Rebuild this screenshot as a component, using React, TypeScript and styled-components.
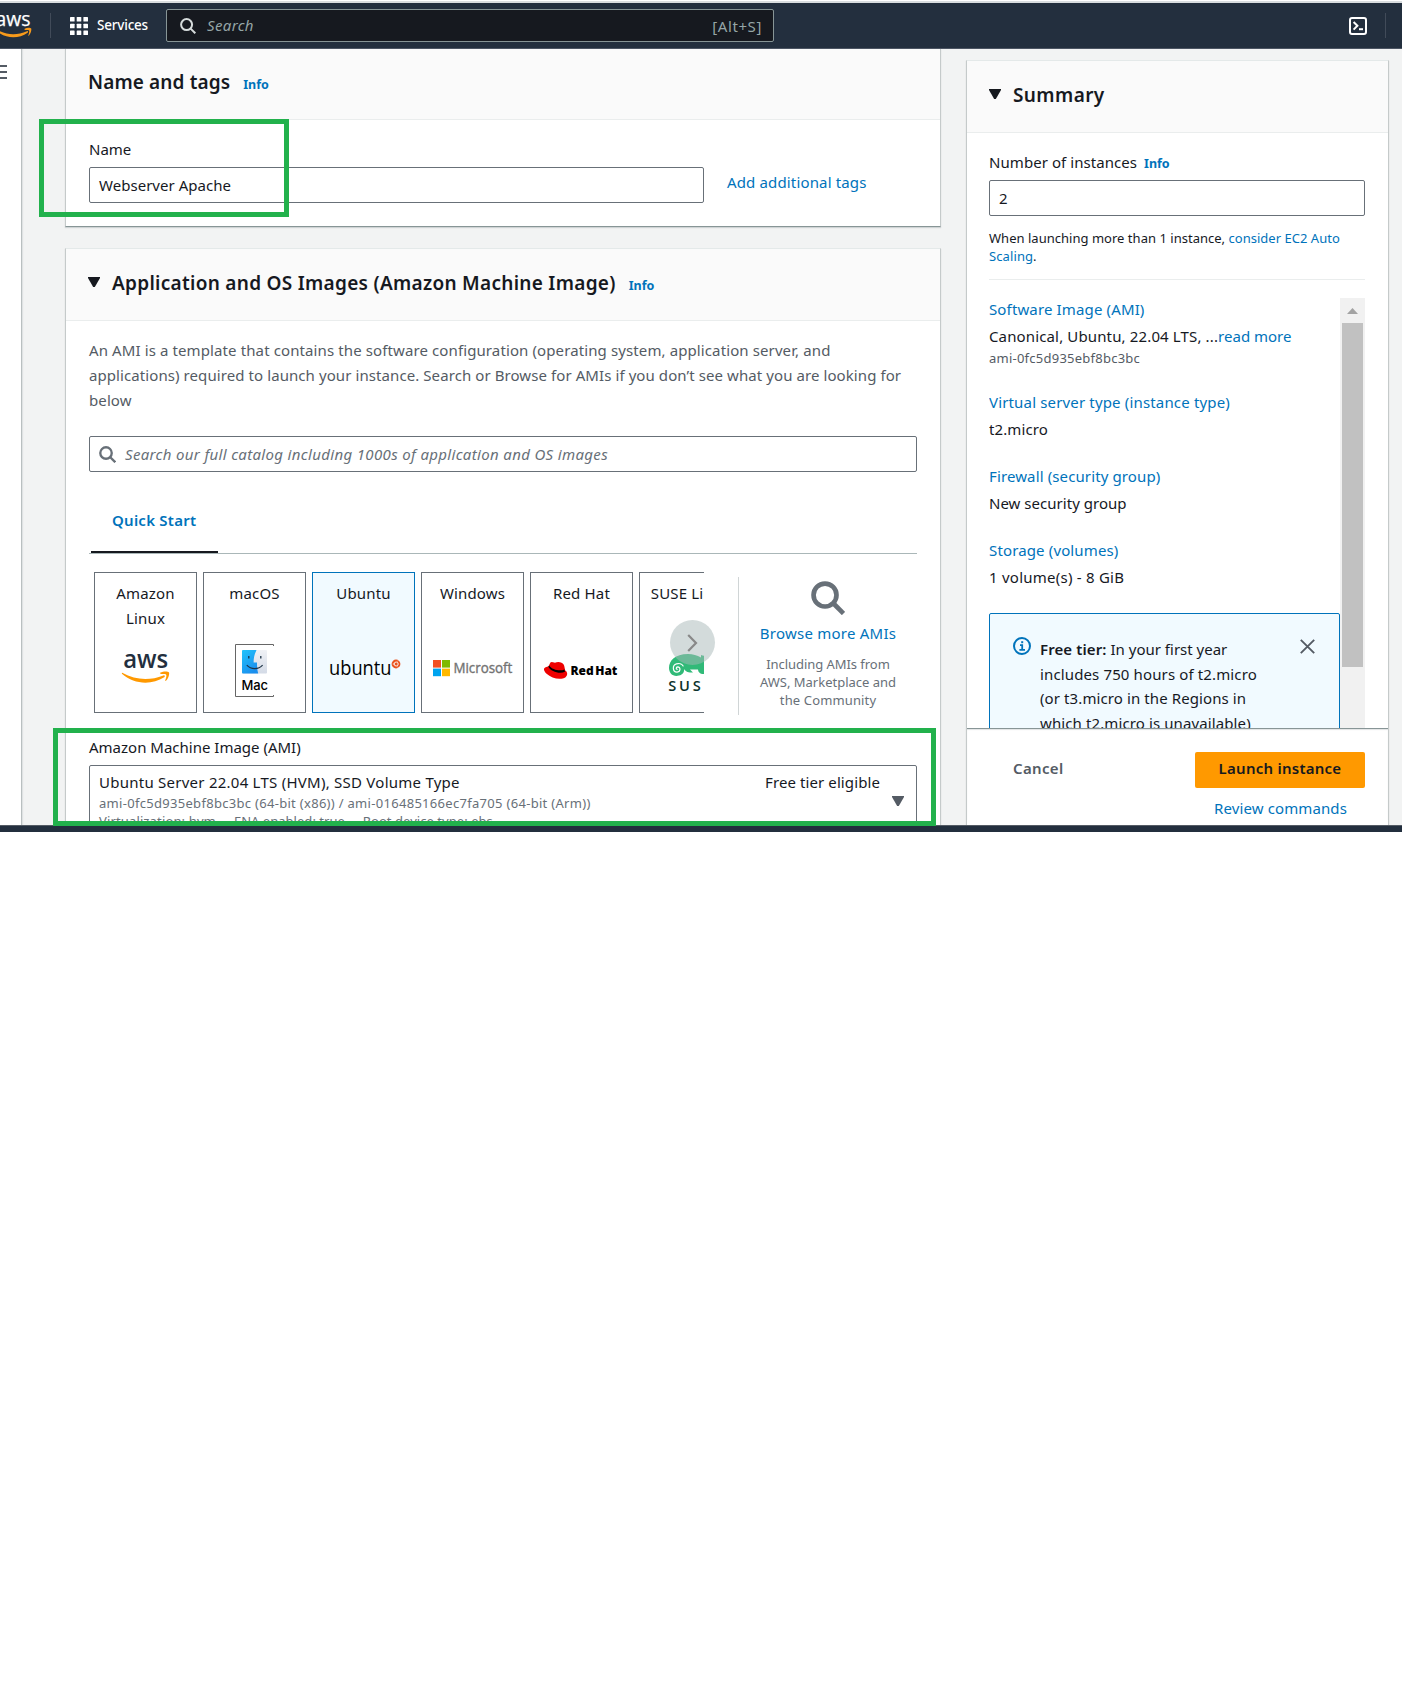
import React from "react";
import styled, { createGlobalStyle, css } from "styled-components";

const ink = "#16191f";
const muted = "#545b64";
const faint = "#687078";
const link = "#0073bb";

const GlobalStyle = createGlobalStyle`
  * { box-sizing: border-box; }
  body { margin: 0; background: #fff; font-family: "Noto Sans", "Open Sans", sans-serif; font-size: 15px; line-height: 24px; color: ${ink}; }
`;

/* ---------- text ---------- */

const Text = styled.span<{ $ls?: number; $color?: string }>`
  white-space: pre;
  letter-spacing: ${(p) => p.$ls ?? 0}px;
  ${(p) => p.$color && css`color: ${p.$color};`}
`;
const Line = styled(Text)`display: block;`;
const Link = styled(Text)`color: ${link};`;
const BlockLink = styled(Link)`display: block;`;
const Small = styled(Line)`
  font-size: 13px;
  line-height: 18px;
`;
const Heading = styled(Text)`
  font-size: 19px;
  font-weight: 600;
`;
const Info = styled.span<{ $gap: number }>`
  margin-left: ${(p) => p.$gap}px;
  font-size: 12.5px;
  font-weight: 700;
  color: ${link};
`;

/* ---------- frame ---------- */

const Screen = styled.div`
  position: relative;
  width: 1402px;
  height: 832px;
  overflow: hidden;
`;
const TopEdge = styled.div`
  height: 3px;
  border-top: 1px solid #fff;
  background: #d9dddf;
`;
const Nav = styled.header`
  display: flex;
  align-items: center;
  height: 46px;
  border-bottom: 1px solid #4c5563;
  background: #232f3e;
  color: #fff;
`;
const NavRule = styled.div<{ $ml: number }>`
  width: 1px;
  height: 25px;
  margin-left: ${(p) => p.$ml}px;
  background: #414b59;
`;
const LogoSlot = styled.div`
  width: 50px;
  height: 45px;
`;
const Services = styled.div`
  display: flex;
  align-items: center;
  width: 115px;
  padding-left: 19px;
  gap: 9px;
  font-size: 13.5px;
  font-weight: 500;
`;
const ServicesLabel = styled(Text)`
  padding-bottom: 2px;
`;
const NavSearch = styled.div`
  display: flex;
  align-items: center;
  width: 608px;
  height: 33px;
  padding: 0 11px 0 13px;
  border: 1px solid #879596;
  border-radius: 2px;
  background: #16191f;
  color: #95a5a6;
`;
const NavPlaceholder = styled(Text)`
  flex: 1;
  margin-left: 11px;
  padding-bottom: 2px;
  font-style: italic;
`;
const ShellSlot = styled.div`
  display: flex;
  margin-left: auto;
`;
const NavEnd = styled.div`width: 16px;`;

const Body = styled.div`
  display: flex;
  height: 776px;
  overflow: hidden;
  background: #f2f3f3;
`;
const BottomBar = styled.div`
  height: 7px;
  border-top: 1px solid #545b64;
  background: #232f3e;
`;
const Sidebar = styled.aside`
  flex: none;
  width: 22px;
  padding-top: 16px;
  border-right: 1px solid #b9bfc0;
  background: #fff;
  box-shadow: 1px 0 1px rgba(0, 28, 36, 0.08);
`;
const Burger = styled.div`
  display: grid;
  gap: 4px;
  width: 7px;
  &::before { content: ""; height: 2px; background: ${muted}; }
  &::after { content: ""; height: 2px; background: ${muted}; }
`;
const BurgerBar = styled.i`
  height: 2px;
  background: ${muted};
`;
const Content = styled.main`
  flex: none;
  width: 876px;
  margin-left: 43px;
`;
const Aside = styled.aside`
  flex: none;
  width: 423px;
  margin-left: 25px;
  padding-top: 11px;
`;

/* ---------- cards ---------- */

const Card = styled.section<{ $h: number; $open?: boolean }>`
  height: ${(p) => p.$h}px;
  border: 1px solid #c5caca;
  border-top-color: #e4e9e9;
  border-top-width: ${(p) => (p.$open ? 0 : 1)}px;
  border-bottom-color: #879596;
  background: #fff;
  box-shadow: 0 1px 1px rgba(0, 28, 36, 0.14);
  & + & { margin-top: 21px; }
`;
const CardHeader = styled.div<{ $h: number; $pad: number }>`
  display: flex;
  align-items: baseline;
  height: ${(p) => p.$h}px;
  padding: ${(p) => p.$pad}px 22px 0;
  border-bottom: 1px solid #eaeded;
  background: #fafafa;
`;
const Caret = styled.i<{ $color?: string }>`
  width: 12px;
  height: 10px;
  background: ${(p) => p.$color ?? ink};
  clip-path: polygon(0 0, 100% 0, 100% 10%, 57% 100%, 43% 100%, 0 10%);
`;
const HeaderCaret = styled(Caret)`
  align-self: flex-start;
  margin: 6px 12px 0 0;
`;
const CardBody = styled.div<{ $pad: number }>`
  padding: ${(p) => p.$pad}px 23px 0;
`;
const Field = styled.div<{ $w?: number }>`
  display: flex;
  align-items: center;
  width: ${(p) => (p.$w ? p.$w + "px" : "auto")};
  height: 36px;
  padding: 0 9px;
  border: 1px solid ${faint};
  border-radius: 2px;
  background: #fff;
`;
const NameRow = styled.div`
  display: flex;
  gap: 23px;
  margin-top: 6px;
`;
const TagsLink = styled(Link)`
  padding-top: 3px;
`;
const Description = styled.div`
  color: ${muted};
  line-height: 25px;
`;
const CatalogSearch = styled(Field)`
  margin-top: 23px;
  gap: 9px;
  font-style: italic;
  color: ${faint};
`;
const Tabs = styled.div`
  display: flex;
  align-items: flex-end;
  height: 82px;
  padding-left: 2px;
  border-bottom: 1px solid #aab7b8;
`;
const Tab = styled.div`
  width: 127px;
  height: 45px;
  padding-left: 21px;
  border-bottom: 2px solid ${ink};
  font-weight: 600;
  color: ${link};
`;
const Picker = styled.div`
  display: flex;
  height: 141px;
  margin-top: 18px;
`;
const CarouselFrame = styled.div`
  position: relative;
  width: 649px;
`;
const Carousel = styled.div`
  display: flex;
  gap: 6px;
  width: 615px;
  padding-left: 5px;
  overflow: hidden;
`;
const OsCard = styled.div<{ $on?: boolean }>`
  display: flex;
  flex: none;
  flex-direction: column;
  width: 103px;
  height: 141px;
  padding-top: 8px;
  border: 1px solid ${(p) => (p.$on ? link : faint)};
  background: ${(p) => (p.$on ? "#f1faff" : "#fff")};
`;
const OsName = styled.div`
  height: 59px;
  line-height: 25px;
  text-align: center;
  letter-spacing: 0.15px;
  white-space: pre;
`;
const NextButton = styled.button`
  position: absolute;
  top: 48px;
  left: 581px;
  display: flex;
  align-items: center;
  justify-content: center;
  width: 45px;
  height: 45px;
  padding: 0;
  border: 0;
  border-radius: 50%;
  background: rgba(168, 184, 183, 0.5);
`;
const Browse = styled.div`
  display: flex;
  flex: 1;
  flex-direction: column;
  align-items: center;
  height: 138px;
  margin-top: 5px;
  padding-top: 4px;
  border-left: 1px solid #d0d5d6;
`;
const BrowseNote = styled.div`
  margin-top: 10px;
  text-align: center;
  color: ${faint};
`;
const BrowseLink = styled(Link)`
  margin-top: 6px;
`;
const AmiLabel = styled(Line)`
  margin-top: 22px;
`;
const AmiSelect = styled.div`
  display: flex;
  justify-content: space-between;
  height: 100px;
  margin-top: 6px;
  padding: 6px 12px 0 9px;
  border: 1px solid ${faint};
  border-radius: 2px;
`;
const AmiTitle = styled(Line)`
  margin-bottom: 2px;
  line-height: 20px;
`;
const AmiMeta = styled.div`
  display: flex;
  gap: 18px;
`;
const AmiSide = styled.div`
  display: flex;
`;
const SelectCaret = styled(Caret)`
  margin: 24px 0 0 12px;
`;

/* ---------- summary ---------- */

const LabelRow = styled.div`
  display: flex;
  align-items: baseline;
  height: 24px;
  margin-bottom: 6px;
`;
const Hint = styled.div`
  height: 51px;
  margin-top: 13px;
  border-bottom: 1px solid #eaeded;
  line-height: 18px;
  font-size: 13px;
`;
const SummaryBody = styled.div`
  height: 595px;
  padding: 17px 23px 0 22px;
`;
const Scroller = styled.div`
  display: flex;
  height: 430px;
  margin-top: 18px;
  overflow: hidden;
`;
const ScrollContent = styled.div`
  width: 351px;
  margin-top: -1px;
`;
const ScrollTrack = styled.div`
  width: 25px;
  padding: 10px 2px 0;
  background: #f1f1f1;
`;
const ScrollArrow = styled.div`
  width: 11px;
  height: 6px;
  margin: 0 auto 9px;
  background: #a3a3a3;
  clip-path: polygon(50% 0, 100% 100%, 0 100%);
`;
const ScrollThumb = styled.div`
  height: 344px;
  background: #c1c1c1;
`;
const Item = styled.div`
  margin-bottom: 23px;
`;
const ItemValue = styled.div`
  margin: 3px 0 1px;
`;
const Alert = styled.div`
  display: flex;
  height: 140px;
  margin-top: 24px;
  padding: 23px 24px 0 23px;
  border: 1px solid ${link};
  border-radius: 2px;
  background: #f1faff;
  line-height: 24.6px;
`;
const AlertText = styled.div`
  flex: 1;
  margin-left: 9px;
`;
const Bold = styled(Text)`font-weight: 600;`;
const CloseSlot = styled.div`
  display: flex;
  padding-top: 2px;
`;
const Footer = styled.div`
  display: flex;
  justify-content: space-between;
  padding: 23px 23px 0 46px;
  border-top: 1px solid #879596;
  box-shadow: inset 0 1px 1px rgba(0, 28, 36, 0.12);
`;
const Cancel = styled(Bold)`
  padding-top: 4px;
  color: ${muted};
`;
const FooterActions = styled.div`
  display: flex;
  flex-direction: column;
`;
const Launch = styled.button`
  width: 170px;
  height: 36px;
  margin-bottom: 8px;
  padding: 0 0 4px;
  border: 0;
  border-radius: 2px;
  background: #ff9900;
  color: ${ink};
  font: 600 15px/24px "Noto Sans", sans-serif;
  letter-spacing: 0.25px;
`;
const Review = styled(Link)`
  padding-left: 19px;
`;

/* ---------- annotations ---------- */

const Highlight = styled.div<{ $x: number; $y: number; $w: number; $h: number }>`
  position: absolute;
  left: ${(p) => p.$x}px;
  top: ${(p) => p.$y}px;
  width: ${(p) => p.$w}px;
  height: ${(p) => p.$h}px;
  border: 5px solid #22b14c;
`;

/* ---------- drawings ---------- */

const Magnifier = ({ size, color, stroke }: { size: number; color: string; stroke: number }) => (
  <svg width={size} height={size} viewBox="0 0 16 16" fill="none" stroke={color} strokeWidth={stroke}>
    <circle cx="6.6" cy="6.6" r={6.5 - stroke / 2} />
    <path d="M10.6 10.6 L15.3 15.3" />
  </svg>
);

const GridIcon = () => (
  <svg width="18" height="18" fill="#fff">
    {[0, 6.7, 13.4].map((y) =>
      [0, 6.7, 13.4].map((x) => <rect key={`${x}-${y}`} x={x} y={y} width="4.6" height="4.6" rx="0.6" />)
    )}
  </svg>
);

const Smile = ({ color }: { color: string }) => (
  <g fill={color}>
    <path d="M0.2 0.4 C14 8 28 8.2 41.4 3 C42.8 2.6 43.5 4 42.2 4.9 C30 12.8 12 12.2 0.2 1.7 C-0.4 1 -0.2 0.2 0.2 0.4 Z" />
    <path d="M38.4 0.2 C41.5 -1.5 46.2 -1.2 47 0 C47.6 1 46.6 6.2 43.9 8.4 C43.4 8.7 43 8.4 43.2 7.9 C44 6 44.8 3.1 44.2 2.3 C43.6 1.6 41 1.6 39 1.7 C38.2 1.7 37.9 0.7 38.4 0.2 Z" />
  </g>
);

const NavAws = () => (
  <svg width="50" height="45" fontFamily="Open Sans, sans-serif">
    <text x="-4.5" y="22.6" fontSize="20" fontWeight="500" fill="#fff" stroke="#fff" strokeWidth="0.25" textLength="35" lengthAdjust="spacingAndGlyphs">aws</text>
    <g transform="translate(-4.5 25.6) scale(0.76 0.85)"><Smile color="#f79a1b" /></g>
  </svg>
);

const ShellIcon = () => (
  <svg width="18" height="18" fill="none" stroke="#fff" strokeWidth="2">
    <rect x="1" y="1" width="16" height="16" rx="2" />
    <path d="M4.6 5 L8.4 8.8 L4.6 12.6" />
    <path d="M10 12.2 H14" />
  </svg>
);

const Logo = styled.svg.attrs({ width: 101, height: 65, viewBox: "0 0 101 65" })`
  display: block;
  font-family: "Open Sans", "Noto Sans", sans-serif;
`;

const AwsLogo = () => (
  <Logo>
    <text x="28.2" y="28" fontSize="25" fontWeight="600" fill="#232f3e" textLength="45" lengthAdjust="spacingAndGlyphs">aws</text>
    <g transform="translate(27 32.4)"><Smile color="#ff9900" /></g>
  </Logo>
);

const MacLogo = () => (
  <Logo>
    <defs>
      <linearGradient id="finderBlue" x1="0" y1="0" x2="0.6" y2="1">
        <stop offset="0" stopColor="#22c3fb" />
        <stop offset="1" stopColor="#1a8fee" />
      </linearGradient>
      <linearGradient id="finderGrey" x1="0" y1="0" x2="0" y2="1">
        <stop offset="0" stopColor="#f0f2f6" />
        <stop offset="1" stopColor="#d3dae6" />
      </linearGradient>
    </defs>
    <path d="M69.5 6 V4.5 H31.5 V56.5 H69.5 V55" fill="#fff" stroke="#666" />
    <rect x="38" y="10" width="25" height="23.6" rx="1" fill="url(#finderGrey)" />
    <path d="M39 10 H52.5 C50.5 14 49.6 18 49.6 22.6 H53 C53 26.5 53.2 30 54.2 33.6 H39 Q38 33.6 38 32.6 V11 Q38 10 39 10 Z" fill="url(#finderBlue)" />
    <path d="M44.8 16 V18.6 M56.8 16 V18.6" stroke="#1d3346" strokeWidth="1.3" />
    <path d="M42.8 25.2 C47 29.8 54.5 29.8 58.6 25.2" fill="none" stroke="#1d3346" strokeWidth="1.2" />
    <text x="37.4" y="50.4" fontSize="13" fontFamily="Inter, sans-serif" fontWeight="500" textLength="26.5" fill="#000">Mac</text>
  </Logo>
);

const UbuntuLogo = () => (
  <Logo>
    <text x="16" y="35.4" fontSize="20" fontWeight="500" textLength="62.5" lengthAdjust="spacingAndGlyphs" fill="#000">ubuntu</text>
    <circle cx="83" cy="24" r="4.4" fill="#e95420" />
    <circle cx="83.2" cy="24" r="2" fill="none" stroke="#fff" strokeWidth="0.9" />
    <path d="M79.8 24 H81 M84.6 21.3 L85.1 20.5 M84.6 26.7 L85.1 27.5" stroke="#fff" strokeWidth="0.8" />
  </Logo>
);

const MicrosoftLogo = () => (
  <Logo>
    <rect x="11" y="20" width="8" height="7.6" fill="#f25022" />
    <rect x="20" y="20" width="8" height="7.6" fill="#7fba00" />
    <rect x="11" y="28.6" width="8" height="7.6" fill="#00a4ef" />
    <rect x="20" y="28.6" width="8" height="7.6" fill="#ffb900" />
    <text x="31.4" y="33.4" fontSize="14" textLength="59" lengthAdjust="spacingAndGlyphs" fill="#737373" stroke="#737373" strokeWidth="0.35">Microsoft</text>
  </Logo>
);

const RedHatLogo = () => (
  <Logo>
    <path d="M17.6 26.2 L19.4 22.6 Q20.2 21.6 22 22.2 L24 22.8 Q26 21.8 29 22.2 Q32.4 22.8 33.2 25.8 L34.2 30.6 C36.6 31.8 37 35.4 34.6 37.2 C30 40.4 20.6 38.6 15.6 33.8 C12.4 30.6 12.2 28 14.6 27.2 Q16 26.8 17.6 26.2 Z" fill="#e00" />
    <path d="M17.4 26.8 C19.6 31.4 28.6 34.6 34 31.8 L33.4 29.4 C29 31.6 21 29.6 18 25.4 Z" fill="#000" />
    <text x="39.4" y="35" fontSize="12.4" fontWeight="800" wordSpacing="-1.5" textLength="47" lengthAdjust="spacingAndGlyphs" fill="#000">Red Hat</text>
  </Logo>
);

const SuseLogo = () => (
  <Logo>
    <path
      d="M29 28 C29 20.5 35 14 48 14 C53 14 57 15.4 61 17.6 V15 C68 17 76 19 78 22 C79.5 25 76 27 70 26.6 C66 26.4 64 28 66 31 H69 V34 H62 C60 33.6 58 32 58 29.6 H50 L53 32.4 H50 C46 32.2 45 30 44 29 C44.8 34 40 36 36.4 36 C32 36 29 32.4 29 28 Z"
      fill="#30ba78"
    />
    <path d="M37.6 29.4 C35.8 29.6 35.8 27 37.8 26.8 C40.6 26.8 41 31.8 37.2 32.2 C32.6 32.4 31.8 25.4 36.6 23.8 C40 22.8 42.6 24.4 43.4 26.4" fill="none" stroke="#fff" strokeWidth="1.2" />
    <text x="28.2" y="51" fontSize="14.6" letterSpacing="2.8" fontWeight="600" fill="#0c322c">SUSE</text>
  </Logo>
);

const InfoIcon = () => (
  <svg width="18" height="18" fill="none" stroke={link} strokeWidth="2">
    <circle cx="9" cy="9" r="8" />
    <path d="M9.2 4.2 V6.2" />
    <path d="M7 8.2 H9.2 V12.6 M6.4 12.8 H12" strokeWidth="1.8" />
  </svg>
);

const CloseIcon = () => (
  <svg width="15" height="15" viewBox="0 0 15 15" stroke={muted} strokeWidth="1.9">
    <path d="M0.8 0.8 L14.2 14.2 M14.2 0.8 L0.8 14.2" />
  </svg>
);

const systems = [
  { name: "Amazon\nLinux", Mark: AwsLogo },
  { name: "macOS", Mark: MacLogo },
  { name: "Ubuntu", Mark: UbuntuLogo, on: true },
  { name: "Windows", Mark: MicrosoftLogo },
  { name: "Red Hat", Mark: RedHatLogo },
  { name: "SUSE Linux", Mark: SuseLogo },
];

export default function App() {
  return (
    <Screen>
      <GlobalStyle />
      <TopEdge />
      <Nav>
        <LogoSlot><NavAws /></LogoSlot>
        <NavRule $ml={0} />
        <Services>
          <GridIcon />
          <ServicesLabel $ls={-0.2}>Services</ServicesLabel>
        </Services>
        <NavSearch>
          <Magnifier size={16} color="#d5dbdb" stroke={2} />
          <NavPlaceholder $ls={0.35}>Search</NavPlaceholder>
          <Text $ls={0.6}>[Alt+S]</Text>
        </NavSearch>
        <ShellSlot><ShellIcon /></ShellSlot>
        <NavRule $ml={18} />
        <NavEnd />
      </Nav>

      <Body>
        <Sidebar>
          <Burger><BurgerBar /></Burger>
        </Sidebar>

        <Content>
          <Card $h={178} $open>
            <CardHeader $h={71} $pad={21}>
              <Heading $ls={0.12}>Name and tags</Heading>
              <Info $gap={13}>Info</Info>
            </CardHeader>
            <CardBody $pad={17}>
              <Line>Name</Line>
              <NameRow>
                <Field $w={615}><Text $ls={0.03}>Webserver Apache</Text></Field>
                <TagsLink $ls={0.15}>Add additional tags</TagsLink>
              </NameRow>
            </CardBody>
          </Card>

          <Card $h={700}>
            <CardHeader $h={72} $pad={22}>
              <HeaderCaret />
              <Heading $ls={0.29}>Application and OS Images (Amazon Machine Image)</Heading>
              <Info $gap={13}>Info</Info>
            </CardHeader>
            <CardBody $pad={17}>
              <Description>
                <Line $ls={0.11}>An AMI is a template that contains the software configuration (operating system, application server, and</Line>
                <Line $ls={0.083}>applications) required to launch your instance. Search or Browse for AMIs if you don’t see what you are looking for</Line>
                <Line $ls={0.1}>below</Line>
              </Description>
              <CatalogSearch>
                <Magnifier size={17} color={faint} stroke={2.2} />
                <Text $ls={0.341}>Search our full catalog including 1000s of application and OS images</Text>
              </CatalogSearch>
              <Tabs>
                <Tab><Text $ls={0.25}>Quick Start</Text></Tab>
              </Tabs>
              <Picker>
                <CarouselFrame>
                  <Carousel>
                    {systems.map(({ name, Mark, on }) => (
                      <OsCard key={name} $on={on}>
                        <OsName>{name}</OsName>
                        <Mark />
                      </OsCard>
                    ))}
                  </Carousel>
                  <NextButton>
                    <svg width="11" height="18" fill="none" stroke="#888" strokeWidth="2.2">
                      <path d="M1.2 1 L9 9 L1.2 17" />
                    </svg>
                  </NextButton>
                </CarouselFrame>
                <Browse>
                  <Magnifier size={34} color={faint} stroke={2.2} />
                  <BrowseLink $ls={0.24}>Browse more AMIs</BrowseLink>
                  <BrowseNote>
                    <Small $ls={-0.055}>Including AMIs from</Small>
                    <Small $ls={0}>AWS, Marketplace and</Small>
                    <Small $ls={0.14}>the Community</Small>
                  </BrowseNote>
                </Browse>
              </Picker>
              <AmiLabel>Amazon Machine Image (AMI)</AmiLabel>
              <AmiSelect>
                <div>
                  <AmiTitle $ls={0.25}>Ubuntu Server 22.04 LTS (HVM), SSD Volume Type</AmiTitle>
                  <Small $ls={0.3} $color={faint}>ami-0fc5d935ebf8bc3bc (64-bit (x86)) / ami-016485166ec7fa705 (64-bit (Arm))</Small>
                  <AmiMeta>
                    <Small $ls={0.14} $color={faint}>Virtualization: hvm</Small>
                    <Small $ls={0.03} $color={faint}>ENA enabled: true</Small>
                    <Small $ls={0.05} $color={faint}>Root device type: ebs</Small>
                  </AmiMeta>
                </div>
                <AmiSide>
                  <AmiTitle $ls={0.1}>Free tier eligible</AmiTitle>
                  <SelectCaret $color={muted} />
                </AmiSide>
              </AmiSelect>
            </CardBody>
          </Card>
        </Content>

        <Aside>
          <Card $h={900}>
            <CardHeader $h={72} $pad={22}>
              <HeaderCaret />
              <Heading $ls={0.4}>Summary</Heading>
            </CardHeader>
            <SummaryBody>
              <LabelRow>
                <Text $ls={0.06}>Number of instances</Text>
                <Info $gap={7}>Info</Info>
              </LabelRow>
              <Field>2</Field>
              <Hint>
                <Text $ls={0.02}>When launching more than 1 instance, </Text>
                <Link $ls={0.02}>consider EC2 Auto</Link>
                <br />
                <Link $ls={0.1}>Scaling</Link>.
              </Hint>
              <Scroller>
                <ScrollContent>
                  <Item>
                    <BlockLink $ls={0.138}>Software Image (AMI)</BlockLink>
                    <ItemValue>
                      <Text $ls={0.14}>Canonical, Ubuntu, 22.04 LTS, ...</Text>
                      <Link>read more</Link>
                    </ItemValue>
                    <Small $ls={0.24} $color={muted}>ami-0fc5d935ebf8bc3bc</Small>
                  </Item>
                  <Item>
                    <BlockLink $ls={0.16}>Virtual server type (instance type)</BlockLink>
                    <ItemValue><Text $ls={0.1}>t2.micro</Text></ItemValue>
                  </Item>
                  <Item>
                    <BlockLink $ls={0.12}>Firewall (security group)</BlockLink>
                    <ItemValue><Text $ls={0.03}>New security group</Text></ItemValue>
                  </Item>
                  <Item>
                    <BlockLink $ls={0.14}>Storage (volumes)</BlockLink>
                    <ItemValue><Text $ls={0.24}>1 volume(s) - 8 GiB</Text></ItemValue>
                  </Item>
                  <Alert>
                    <InfoIcon />
                    <AlertText>
                      <Line><Bold $ls={0.1}>Free tier: </Bold>In your first year</Line>
                      <Line $ls={0.13}>includes 750 hours of t2.micro</Line>
                      <Line $ls={0.1}>(or t3.micro in the Regions in</Line>
                      <Line $ls={0.11}>which t2.micro is unavailable)</Line>
                    </AlertText>
                    <CloseSlot><CloseIcon /></CloseSlot>
                  </Alert>
                </ScrollContent>
                <ScrollTrack>
                  <ScrollArrow />
                  <ScrollThumb />
                </ScrollTrack>
              </Scroller>
            </SummaryBody>
            <Footer>
              <Cancel $ls={0.35}>Cancel</Cancel>
              <FooterActions>
                <Launch>Launch instance</Launch>
                <Review $ls={0.117}>Review commands</Review>
              </FooterActions>
            </Footer>
          </Card>
        </Aside>
      </Body>
      <BottomBar />

      <Highlight $x={39} $y={119} $w={250} $h={98} />
      <Highlight $x={53} $y={728} $w={883} $h={98} />
    </Screen>
  );
}
